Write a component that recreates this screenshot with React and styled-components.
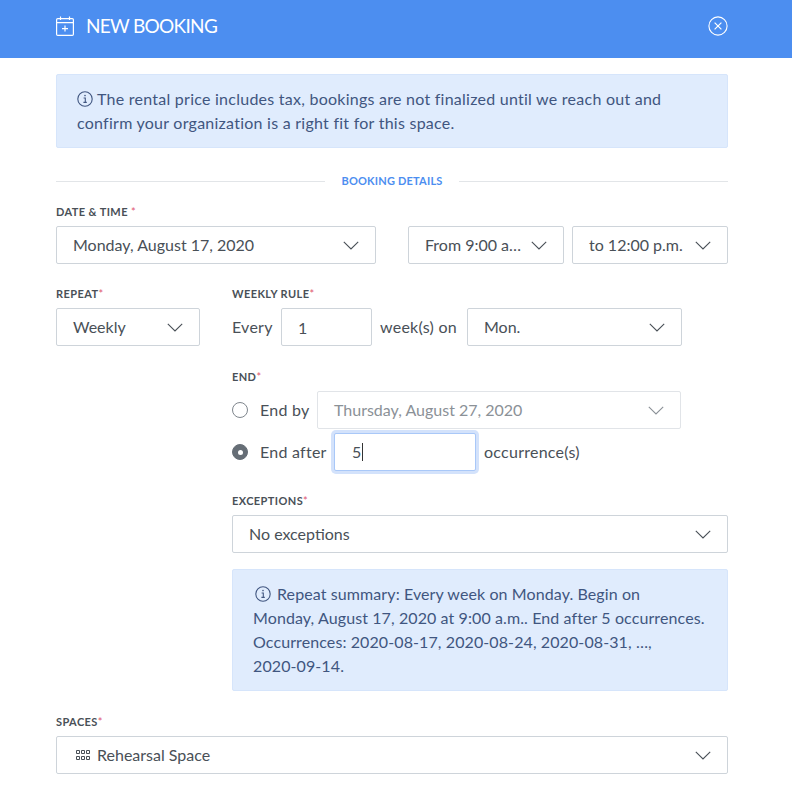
import React from "react"
import styled, { createGlobalStyle } from "styled-components"

const GlobalStyle = createGlobalStyle`
  html, body {
    margin: 0;
    padding: 0;
    background: #fff;
  }
  * {
    box-sizing: border-box;
  }
`

const Chevron = () => (
  <svg width="16" height="9" viewBox="0 0 16 9" fill="none" stroke="currentColor" strokeWidth="1.1">
    <path d="M.8.8 8 8 15.2.8" />
  </svg>
)

const InfoIcon = () => (
  <InfoSvg width="16" height="16" viewBox="0 0 16 16" fill="none" stroke="currentColor">
    <circle cx="8" cy="8" r="7.2" strokeWidth="1.1" />
    <path d="M6.6 7h1.7v4.2M6.4 11.4h3.4" strokeWidth="1.1" />
    <circle cx="8" cy="4.6" r=".8" fill="currentColor" stroke="none" />
  </InfoSvg>
)

const CalendarIcon = () => (
  <svg width="18" height="20" viewBox="0 0 18 20" fill="none" stroke="#fff" strokeWidth="1.2">
    <rect x=".6" y="2.6" width="16.8" height="16.8" rx="1.2" />
    <path d="M.6 6.6h16.8M4.5 .5v3.6M13.5 .5v3.6M9 9.6v6M6 12.6h6" />
  </svg>
)

const CloseIcon = () => (
  <svg width="20" height="20" viewBox="0 0 20 20" fill="none" stroke="#fff">
    <circle cx="10" cy="10" r="9.1" strokeWidth="1.1" />
    <path d="m6.6 6.6 6.8 6.8M13.4 6.6l-6.8 6.8" strokeWidth="1.2" />
  </svg>
)

const GridIcon = () => (
  <svg width="14" height="10" viewBox="0 0 14 10" fill="none" stroke="#495057" strokeWidth="1">
    <path d="M.5.5h3v3h-3zM5.5.5h3v3h-3zM10.5.5h3v3h-3zM.5 6.5h3v3h-3zM5.5 6.5h3v3h-3zM10.5 6.5h3v3h-3z" />
  </svg>
)

const Select = ({ children, width, muted, icon }) => (
  <SelectBox $width={width} $muted={muted}>
    <SelectText>
      {icon}
      {children}
    </SelectText>
    <Chevron />
  </SelectBox>
)

const Req = () => <Star>*</Star>

export default function App() {
  return (
    <>
      <GlobalStyle />
      <Header>
        <HeaderTitle>
          <CalendarIcon />
          <h1>NEW BOOKING</h1>
        </HeaderTitle>
        <CloseIcon />
      </Header>
      <Body>
        <Alert>
          <InfoIcon />The rental price includes tax, bookings are not finalized until we reach out and
          confirm your organization is a right fit for this space.
        </Alert>

        <Divider>BOOKING DETAILS</Divider>

        <Label>DATE &amp; TIME <Req /></Label>
        <DateRow>
          <Select width="320px">Monday, August 17, 2020</Select>
          <TimeGroup>
            <Select width="156px">From 9:00 a…</Select>
            <Select width="156px">to 12:00 p.m.</Select>
          </TimeGroup>
        </DateRow>

        <RepeatGrid>
          <div>
            <Label>REPEAT<Req /></Label>
            <Select width="144px">Weekly</Select>
          </div>
          <div>
            <Label>WEEKLY RULE<Req /></Label>
            <InlineRow>
              <RowText $width="41px">Every</RowText>
              <TextInput $width="91px" value="1" readOnly />
              <RowText $width="79px">week(s) on</RowText>
              <Select width="215px">Mon.</Select>
            </InlineRow>

            <EndSection>
              <Label>END<Req /></Label>
              <InlineRow>
                <Radio />
                <RadioLabel $width="49px">End by</RadioLabel>
                <Select width="364px" muted>Thursday, August 27, 2020</Select>
              </InlineRow>
              <EndAfterRow>
                <Radio $checked />
                <RadioLabel $width="66px">End after</RadioLabel>
                <FocusedInput>5<Caret /></FocusedInput>
                <RowText>occurrence(s)</RowText>
              </EndAfterRow>
            </EndSection>

            <ExceptionsSection>
              <Label>EXCEPTIONS<Req /></Label>
              <Select width="100%">No exceptions</Select>
            </ExceptionsSection>

            <SummaryAlert>
              <InfoIcon />Repeat summary: Every week on Monday. Begin on<br />
              Monday, August 17, 2020 at 9:00 a.m.. End after 5 occurrences.<br />
              Occurrences: 2020-08-17, 2020-08-24, 2020-08-31, …,<br />
              2020-09-14.
            </SummaryAlert>
          </div>
        </RepeatGrid>

        <SpacesSection>
          <Label>SPACES<Req /></Label>
          <Select width="100%" icon={<GridIcon />}>Rehearsal Space</Select>
        </SpacesSection>
      </Body>
    </>
  )
}

const Header = styled.header`
  height: 58px;
  background: #4c8ef0;
  color: #fff;
  padding: 0 64px 6px 56px;
  display: flex;
  align-items: center;
  justify-content: space-between;
`

const HeaderTitle = styled.div`
  display: flex;
  align-items: center;
  gap: 12px;
  h1 {
    margin: 0;
    font: 400 19px/24px "Lato", sans-serif;
    letter-spacing: -0.7px;
  }
`

const Body = styled.main`
  padding: 16px 64px 0 56px;
  font: 400 16px/24px "Lato", sans-serif;
  letter-spacing: 0.25px;
  color: #495057;
`

const Alert = styled.div`
  background: #e0ecfd;
  border: 1px solid #d6e5fb;
  border-radius: 2px;
  color: #405680;
  padding: 12px 20px;
`

const SummaryAlert = styled(Alert)`
  margin-top: 16px;
  letter-spacing: 0.1px;
  white-space: nowrap;
  svg {
    margin: 0 6px 0 2px;
  }
`

const InfoSvg = styled.svg`
  vertical-align: -2px;
  margin-right: 4px;
`

const Divider = styled.div`
  display: flex;
  align-items: center;
  gap: 16px;
  margin: 24px 0 15px;
  height: 18px;
  color: #4c8ef0;
  font-size: 11px;
  font-weight: 700;
  letter-spacing: 0.2px;
  white-space: nowrap;
  &::before,
  &::after {
    content: "";
    flex: 1;
    height: 1px;
    background: #e2e5e8;
  }
`

const Label = styled.div`
  font-size: 11px;
  line-height: 14px;
  font-weight: 700;
  letter-spacing: 0.4px;
  color: #495057;
  margin-bottom: 7px;
  height: 14px;
  white-space: nowrap;
`

const Star = styled.span`
  color: #e0566f;
  font-weight: 400;
`

const SelectBox = styled.div`
  width: ${(p) => p.$width};
  height: 38px;
  flex: none;
  display: flex;
  align-items: center;
  justify-content: space-between;
  padding: 0 16px;
  background: #fff;
  border: 1px solid ${(p) => (p.$muted ? "#e1e4e8" : "#ced4da")};
  border-radius: 2px;
  letter-spacing: 0;
  color: ${(p) => (p.$muted ? "#8b9197" : "#495057")};
`

const SelectText = styled.span`
  display: flex;
  align-items: center;
  gap: 7px;
  white-space: nowrap;
  svg {
    margin-left: 3px;
  }
`

const DateRow = styled.div`
  display: flex;
  justify-content: space-between;
`

const TimeGroup = styled.div`
  display: flex;
  gap: 8px;
`

const RepeatGrid = styled.div`
  display: grid;
  grid-template-columns: 144px minmax(0, 1fr);
  gap: 32px;
  margin-top: 23px;
`

const InlineRow = styled.div`
  display: flex;
  align-items: center;
  gap: 8px;
  white-space: nowrap;
`

const RowText = styled.span`
  width: ${(p) => p.$width || "auto"};
  flex: none;
`

const EndAfterRow = styled(InlineRow)`
  margin-top: 4px;
`

const TextInput = styled.input`
  width: ${(p) => p.$width};
  height: 38px;
  padding: 0 16px;
  border: 1px solid #ced4da;
  border-radius: 2px;
  font: inherit;
  letter-spacing: inherit;
  color: #495057;
  outline: none;
`

const FocusedInput = styled.div`
  width: 142px;
  height: 38px;
  display: flex;
  align-items: center;
  padding: 0 17px;
  background: #fff;
  border: 1px solid #a9c8f8;
  border-radius: 2px;
  box-shadow: 0 0 0 3px #d3e2fb;
`

const Caret = styled.span`
  width: 1px;
  height: 18px;
  background: #333;
`

const EndSection = styled.div`
  margin-top: 24px;
`

const ExceptionsSection = styled.div`
  margin-top: 23px;
`

const Radio = styled.span`
  width: 16px;
  height: 16px;
  border-radius: 50%;
  flex: none;
  background: ${(p) => (p.$checked ? "#666e76" : "#fff")};
  border: 1px solid ${(p) => (p.$checked ? "#666e76" : "#7f868d")};
  display: flex;
  align-items: center;
  justify-content: center;
  &::after {
    content: "";
    width: 5px;
    height: 5px;
    border-radius: 50%;
    background: ${(p) => (p.$checked ? "#fff" : "transparent")};
  }
`

const RadioLabel = styled(RowText)`
  margin-left: 4px;
`

const SpacesSection = styled.div`
  margin-top: 24px;
`
